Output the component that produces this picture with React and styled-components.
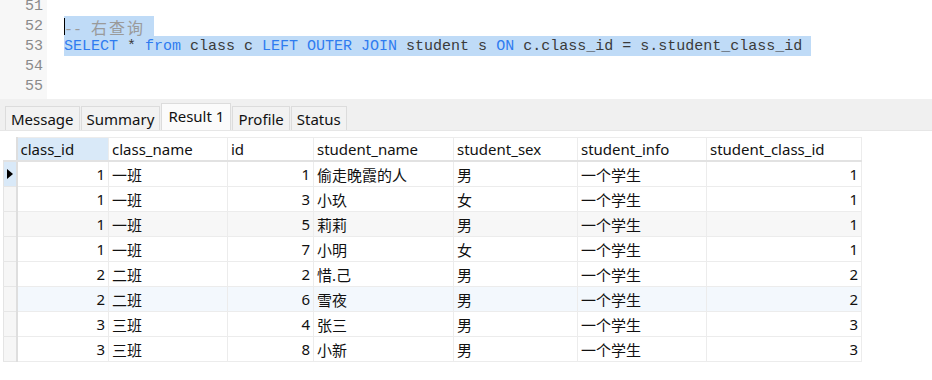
import React from 'react'
import styled, { createGlobalStyle } from 'styled-components'

const Global = createGlobalStyle`
  html, body { margin: 0; padding: 0; background: #fff; overflow: hidden; }
  body { width: 932px; height: 380px; }
`

const Editor = styled.div`
  height: 99px;
  display: flex;
  overflow: hidden;
  background: #fff;
`

const Gutter = styled.div`
  width: 47px;
  background: #f7f7f7;
  margin-top: -3px;
`

const LineNo = styled.div`
  height: 20px;
  line-height: 20px;
  padding-right: 4px;
  text-align: right;
  font-family: "Liberation Mono", "DejaVu Sans Mono", monospace;
  font-size: 15px;
  color: #8a8a8a;
`

const Code = styled.div`
  flex: 1;
  padding-left: 17px;
  margin-top: -4px;
`

const Line = styled.div`
  height: 20px;
  line-height: 20px;
  font-family: "Liberation Mono", "DejaVu Sans Mono", "Noto Sans CJK SC", monospace;
  font-size: 15px;
  color: #3a3a3a;
  white-space: pre;
  position: relative;
`

const Sel = styled.span`
  background: #bfdbf7;
  display: inline-block;
  height: 20px;
  line-height: 22px;
`

const Kw = styled.span`
  color: #2f7cf0;
`

const Comment = styled.span`
  color: #9a9a9a;
`

const Cjk = styled.span`
  font-family: "Noto Sans CJK SC", sans-serif;
  font-size: 16px;
  letter-spacing: 2px;
`

const Caret = styled.span`
  position: absolute;
  left: 0;
  top: 2px;
  width: 1px;
  height: 17px;
  background: #000;
`

const TabStrip = styled.div`
  height: 32px;
  background: #f0f0f0;
  display: flex;
  align-items: flex-end;
  padding-left: 5px;
  border-bottom: 1px solid #e6e6e6;
  box-sizing: border-box;
`

const Tab = styled.div`
  height: ${p => (p.active ? 27 : 24)}px;
  line-height: ${p => (p.active ? 24 : 25)}px;
  padding: 0 ${p => (p.active ? 6 : 5)}px;
  margin-right: 1px;
  box-sizing: border-box;
  border: 1px solid #dcdcdc;
  border-bottom: none;
  background: ${p => (p.active ? '#fbfbfb' : '#f2f2f2')};
  font-family: "Noto Sans", "Noto Sans CJK SC", sans-serif;
  font-size: 15px;
  color: #111;
`

const GridArea = styled.div`
  padding: 6px 0 0 3px;
  background: #fff;
`

const Table = styled.table`
  border-collapse: collapse;
  table-layout: fixed;
  width: 858px;
  font-family: "Noto Sans", "Noto Sans CJK SC", sans-serif;
  font-size: 15px;
  color: #111;
`

const Head = styled.th`
  height: 22px;
  padding: 0 3px;
  font-weight: normal;
  text-align: left;
  white-space: nowrap;
  overflow: hidden;
  border: 1px solid #ececec;
  border-bottom: 2px solid #e2e2e2;
  background: ${p => (p.hot ? '#d9e9f8' : '#fff')};
`

const Corner = styled.th`
  padding: 0;
  background: #fff;
  border-right: 2px solid #dedede;
  border-bottom: 2px solid #e2e2e2;
`

const Marker = styled.td`
  height: 24px;
  padding: 0;
  background: ${p => (p.on ? '#d9e9f8' : '#f6f6f6')};
  border-left: 1px solid #e4e4e4;
  border-right: 2px solid #dedede;
  border-bottom: 1px solid #e6e6e6;
  position: relative;
`

const Arrow = styled.span`
  position: absolute;
  left: 3px;
  top: 7px;
  width: 0;
  height: 0;
  border-top: 5px solid transparent;
  border-bottom: 5px solid transparent;
  border-left: 6px solid #000;
`

const Row = styled.tr`
  background: ${p => p.bg};
`

const Cell = styled.td`
  height: 24px;
  padding: 0 3px;
  white-space: nowrap;
  overflow: hidden;
  border: 1px solid #ececec;
  text-align: ${p => (p.num ? 'right' : 'left')};
`

const cols = [
  { k: 'class_id', w: 92, num: true },
  { k: 'class_name', w: 119 },
  { k: 'id', w: 86, num: true },
  { k: 'student_name', w: 140 },
  { k: 'student_sex', w: 124 },
  { k: 'student_info', w: 129 },
  { k: 'student_class_id', w: 155, num: true },
]

const rows = [
  [1, '一班', 1, '偷走晚霞的人', '男', '一个学生', 1],
  [1, '一班', 3, '小玖', '女', '一个学生', 1],
  [1, '一班', 5, '莉莉', '男', '一个学生', 1],
  [1, '一班', 7, '小明', '女', '一个学生', 1],
  [2, '二班', 2, '惜.己', '男', '一个学生', 2],
  [2, '二班', 6, '雪夜', '男', '一个学生', 2],
  [3, '三班', 4, '张三', '男', '一个学生', 3],
  [3, '三班', 8, '小新', '男', '一个学生', 3],
]

const rowBg = i => (i === 2 ? '#f7f7f7' : i === 5 ? '#f3f8fd' : '#fff')

export default function App() {
  return (
    <>
      <Global />
      <Editor>
        <Gutter>
          {[51, 52, 53, 54, 55].map(n => (
            <LineNo key={n}>{n}</LineNo>
          ))}
        </Gutter>
        <Code>
          <Line> </Line>
          <Line>
            <Caret />
            <Sel>
              <Comment>-- <Cjk>右查询</Cjk> </Comment>
            </Sel>
          </Line>
          <Line>
            <Sel>
              <Kw>SELECT</Kw> * <Kw>from</Kw> class c <Kw>LEFT OUTER JOIN</Kw> student s <Kw>ON</Kw> c.class_id = s.student_class_id{' '}
            </Sel>
          </Line>
          <Line> </Line>
          <Line> </Line>
        </Code>
      </Editor>
      <TabStrip>
        <Tab>Message</Tab>
        <Tab>Summary</Tab>
        <Tab active>Result 1</Tab>
        <Tab>Profile</Tab>
        <Tab>Status</Tab>
      </TabStrip>
      <GridArea>
        <Table>
          <colgroup>
            <col style={{ width: 13 }} />
            {cols.map(c => (
              <col key={c.k} style={{ width: c.w }} />
            ))}
          </colgroup>
          <thead>
            <tr>
              <Corner />
              {cols.map((c, i) => (
                <Head key={c.k} hot={i === 0}>
                  {c.k}
                </Head>
              ))}
            </tr>
          </thead>
          <tbody>
            {rows.map((r, i) => (
              <Row key={i} bg={rowBg(i)}>
                <Marker on={i === 0}>{i === 0 && <Arrow />}</Marker>
                {r.map((v, j) => (
                  <Cell key={j} num={cols[j].num}>
                    {v}
                  </Cell>
                ))}
              </Row>
            ))}
          </tbody>
        </Table>
      </GridArea>
    </>
  )
}
